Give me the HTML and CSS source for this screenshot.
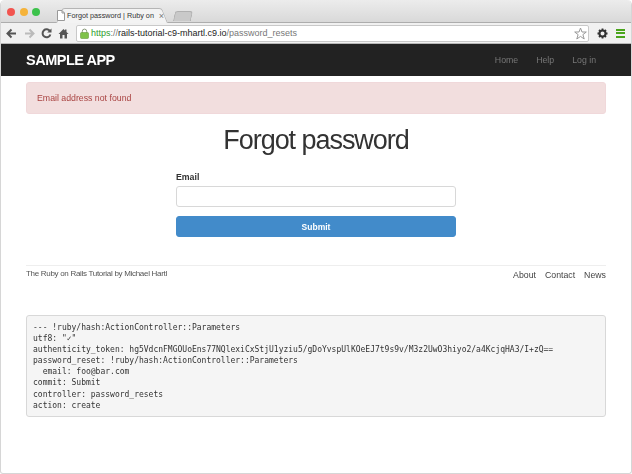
FILE: index.html
```html
<!DOCTYPE html>
<html lang="en">
<head>
<meta charset="utf-8">
<title>Forgot password | Ruby on Rails Tutorial Sample App</title>
<link rel="stylesheet" href="styles.css">
</head>
<body>
<div class="window">
  <div class="tabstrip">
    <div class="lights"><span class="light red"></span><span class="light yellow"></span><span class="light green"></span></div>
    <div class="tab">
      <svg class="page-icon" width="8" height="11" viewBox="0 0 8 11"><path d="M.5.5h4.500l2.500 2.500v7.500h-7z M5 .5V3h2.500" fill="#fff" stroke="#999"/></svg>
      <span class="tab-title">Forgot password | Ruby on</span>
      <span class="tab-close">×</span>
    </div>
    <div class="newtab"></div>
  </div>
  <div class="toolbar">
    <svg class="tool" width="11" height="11" viewBox="0 0 11 11"><path d="M10 5.500H2M5.500 1.500l-4 4 4 4" fill="none" stroke="#555" stroke-width="2"/></svg>
    <svg class="tool" width="11" height="11" viewBox="0 0 11 11"><path d="M1 5.500h8M5.500 1.500l4 4-4 4" fill="none" stroke="#bbb" stroke-width="2"/></svg>
    <svg class="tool" width="11" height="11" viewBox="0 0 11 11"><path d="M9 3.200A4 4 0 1 0 9.400 6.500" fill="none" stroke="#555" stroke-width="2"/><path d="M6.200 4.600h4.300V.4z" fill="#555"/></svg>
    <svg class="tool home" width="11" height="11" viewBox="0 0 11 11"><path d="M5.500 1 .5 6H2v4.500h2.500V7h2v3.500H9V6h1.500L8.500 4V1.500H7V2.500z" fill="#555"/></svg>
    <div class="omnibox">
      <svg class="lock" width="9" height="11" viewBox="0 0 9 11"><path d="M2.300 5V3.300a2.200 2.200 0 0 1 4.400 0V5" fill="none" stroke="#8a9a7a"/><rect x=".5" y="4.500" width="8" height="6" rx="1" fill="#7fc24a" stroke="#6a9a40" stroke-width=".6"/></svg>
      <span class="url"><span class="scheme">https</span><span class="url-sep">://</span>rails-tutorial-c9-mhartl.c9.io<span class="url-path">/password_resets</span></span>
      <svg class="star" width="13" height="13" viewBox="0 0 13 13"><path d="M6.500 1 8 5h4.300L8.900 7.600l1.300 4.400-3.700-2.600L2.800 12l1.300-4.400L.7 5H5z" fill="#fff" stroke="#999"/></svg>
    </div>
    <svg class="gear" width="11" height="11" viewBox="0 0 11 11"><circle cx="5.500" cy="5.500" r="3" fill="none" stroke="#333" stroke-width="2"/><path d="M5.500.5v2M5.500 8.500v2M.5 5.500h2M8.500 5.500h2M2 2l1.400 1.400M7.600 7.600 9 9M9 2 7.600 3.400M3.400 7.600 2 9" stroke="#333" stroke-width="1.800"/></svg>
    <div class="menu-icon"><span></span><span></span><span></span></div>
  </div>
  <header class="navbar">
    <a class="logo">SAMPLE APP</a>
    <nav class="nav-links"><a>Home</a><a>Help</a><a>Log in</a></nav>
  </header>
  <main class="container">
    <div class="alert">Email address not found</div>
    <h1 class="title">Forgot password</h1>
    <form class="form">
      <label class="label">Email</label>
      <div class="input"></div>
      <div class="submit">Submit</div>
    </form>
    <footer class="footer">
      <small class="credit">The Ruby on Rails Tutorial by Michael Hartl</small>
      <nav class="footer-links"><a>About</a><a>Contact</a><a>News</a></nav>
    </footer>
    <pre class="debug">--- !ruby/hash:ActionController::Parameters
utf8: "✓"
authenticity_token: hg5VdcnFMGOUoEns77NQlexiCxStjU1yziu5/gDoYvspUlKOeEJ7t9s9v/M3z2UwO3hiyo2/a4KcjqHA3/I+zQ==
password_reset: !ruby/hash:ActionController::Parameters
  email: foo@bar.com
commit: Submit
controller: password_resets
action: create</pre>
  </main>
</div>
</body>
</html>
```
FILE: styles.css
```css
* { box-sizing: border-box; }
html, body { margin: 0; padding: 0; background: #fff; }
body { width: 632px; height: 474px; overflow: hidden; font-family: "Liberation Sans", Arial, sans-serif; color: #333; }
.window { width: 632px; height: 474px; display: flex; flex-direction: column; background: #fff; border: 1px solid #d6d6d6; border-top: 0; border-radius: 5px 5px 3px 3px; overflow: hidden; filter: blur(0.3px); }

.tabstrip { height: 23px; flex: none; display: flex; align-items: flex-end; padding-left: 6px; background: linear-gradient(#ececec, #d9d9d9); border-bottom: 1px solid #adadad; }
.lights { display: flex; gap: 4.500px; align-self: flex-start; margin-top: 8px; width: 49px; }
.light { width: 8px; height: 8px; border-radius: 50%; }
.red { background: #f2544f; }
.yellow { background: #f5b33a; }
.green { background: #3cc24b; }
.tab { position: relative; isolation: isolate; width: 112px; height: 15px; margin-bottom: -1px; display: flex; align-items: center; gap: 2px; padding: 0 4px 0 1px; }
.tab::before, .tab::after { content: ""; position: absolute; z-index: -1; top: 0; bottom: 0; width: 60%; background: #f3f3f3; border-top: 1px solid #b5b5b5; }
.tab::before { left: 0; border-left: 1px solid #b5b5b5; border-top-left-radius: 3px; transform: skewX(-22deg); transform-origin: bottom left; }
.tab::after { right: 0; border-right: 1px solid #b5b5b5; border-top-right-radius: 3px; transform: skewX(22deg); transform-origin: bottom right; }
.page-icon { flex: none; }
.tab-title { flex: 1; font-size: 7.250px; line-height: 10px; white-space: nowrap; overflow: hidden; color: #333; }
.tab-close { font-size: 9px; line-height: 10px; color: #777; }
.newtab { width: 18px; height: 10px; margin: 0 0 1px 6px; background: #c9c9c9; border: 1px solid #b0b0b0; border-bottom: 0; border-radius: 3px 3px 0 0; transform: skewX(-12deg); }

.toolbar { height: 21px; flex: none; display: flex; align-items: center; padding: 0 6px 0 5px; gap: 6.500px; background: #f1f1f1; border-bottom: 1px solid #b8b8b8; }
.tool { flex: none; }
.tool.home { margin-left: -1px; }
.omnibox { flex: 1; height: 17px; display: flex; align-items: center; gap: 2px; margin: 0 0 0 1px; padding: 0 1px 0 3px; background: #fff; border: 1px solid #c9c9c9; border-radius: 2px; }
.lock { flex: none; }
.url { flex: 1; font-size: 9px; color: #222; white-space: nowrap; }
.scheme { color: #2e9e2e; }
.url-sep, .url-path { color: #777; }
.star { flex: none; }
.gear { flex: none; margin-left: 1px; }
.menu-icon { width: 9px; display: flex; flex-direction: column; gap: 1.500px; margin-left: 2px; }
.menu-icon span { height: 2px; background: #4aa51c; }

.navbar { height: 32px; flex: none; display: flex; align-items: center; justify-content: space-between; padding: 0 35px 0 25px; background: #222; }
.logo { font-size: 14.500px; font-weight: bold; letter-spacing: -0.5px; color: #fff; }
.nav-links { display: flex; gap: 18px; font-size: 8.750px; color: #777; }

.container { flex: 1; padding: 6px 25px 0; }
.alert { height: 32px; display: flex; align-items: center; padding: 0 10px; font-size: 8.750px; color: #a94442; background: #f2dede; border: 1px solid #f0d8da; border-radius: 3px; }
.title { margin: 12px 0 0; height: 28px; font-size: 27px; line-height: 28px; font-weight: 400; letter-spacing: -1.050px; text-align: center; color: #333; }
.form { width: 280px; margin: 17px auto 0; display: flex; flex-direction: column; }
.label { font-size: 8.750px; line-height: 12px; font-weight: bold; height: 14px; }
.input { height: 21px; margin-top: 1px; background: #fff; border: 1px solid #d8d8d8; border-radius: 3px; }
.submit { height: 21px; margin-top: 9px; display: flex; align-items: center; justify-content: center; font-size: 8.500px; font-weight: bold; color: #fff; background: #428bca; border: 1px solid #428bca; border-radius: 3px; }
.footer { margin-top: 28px; height: 50px; padding-top: 3px; display: flex; align-items: flex-start; justify-content: space-between; border-top: 1px solid #eee; }
.credit { font-size: 8px; line-height: 10px; letter-spacing: -0.3px; color: #555; }
.footer-links { display: flex; gap: 9px; font-size: 8.750px; line-height: 12px; color: #444; }
.debug { margin: 0; height: 102px; padding: 6px 6px; font-family: "DejaVu Sans Mono", "Liberation Mono", monospace; font-size: 8px; line-height: 11.100px; color: #333; background: #f5f5f5; border: 1px solid #d8d8d8; border-radius: 3px; white-space: pre; overflow: hidden; }
```
